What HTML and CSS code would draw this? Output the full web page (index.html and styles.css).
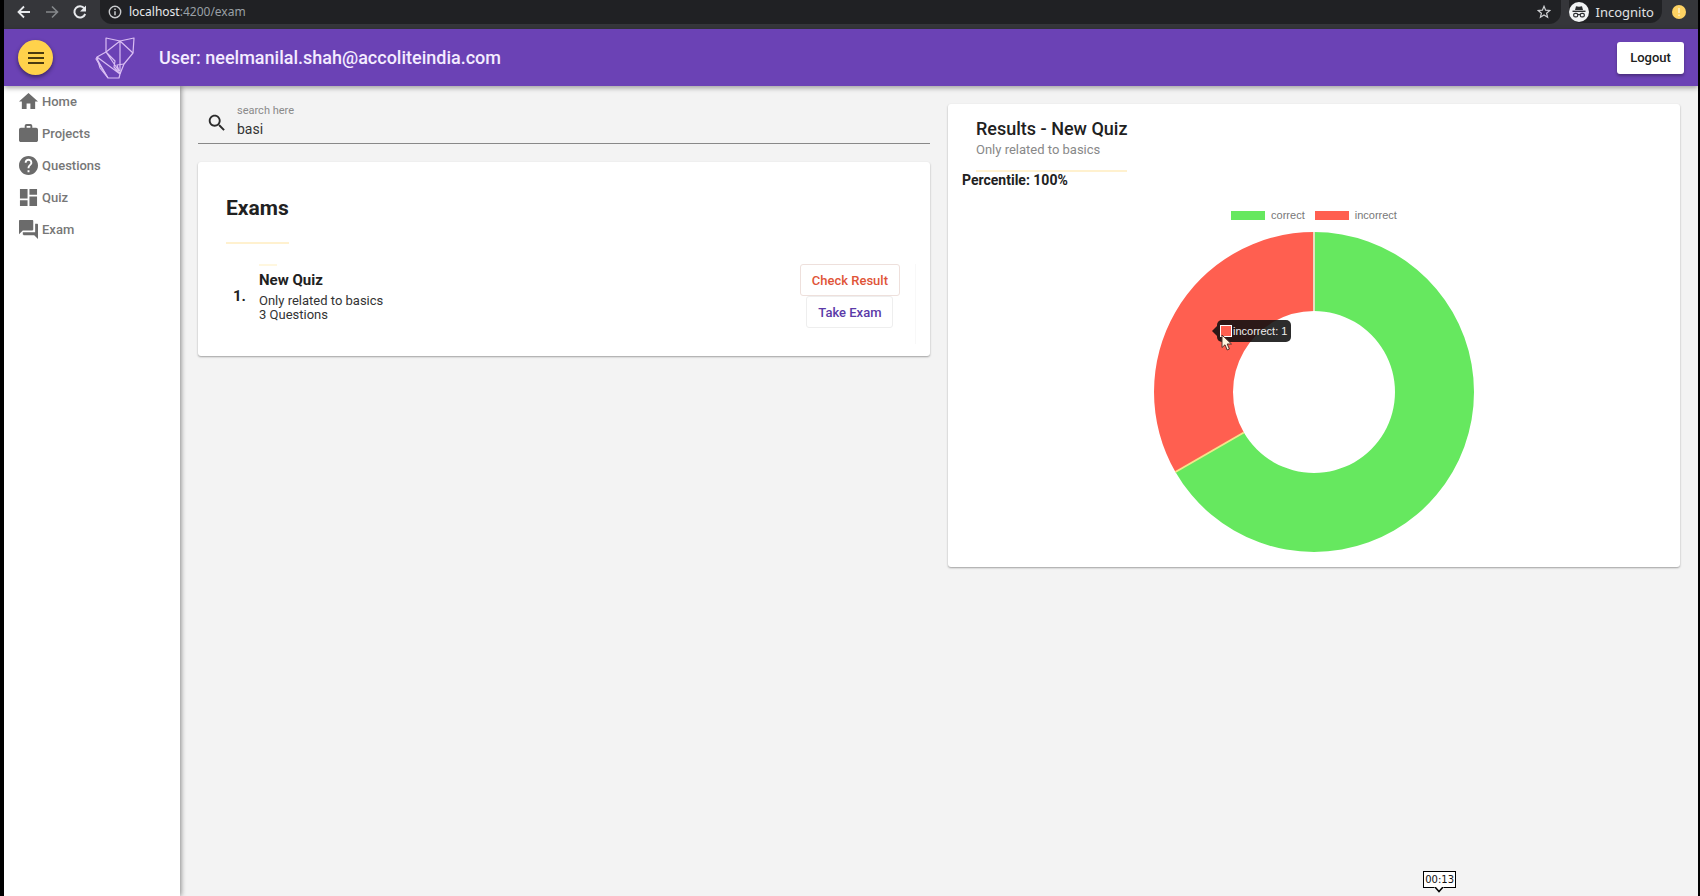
FILE: index.html
```html
<!DOCTYPE html>
<html lang="en">
<head>
<meta charset="utf-8">
<title>Exam</title>
<link rel="stylesheet" href="styles.css">
</head>
<body>
<div class="window">
  <div class="browser">
    <button class="nav-btn" aria-label="Back"><svg width="16" height="16" viewBox="0 0 16 16" fill="none" stroke="#e8eaed" stroke-width="1.8"><path d="M14 8H3M8 2.5L2.5 8L8 13.5"/></svg></button>
    <button class="nav-btn" aria-label="Forward"><svg width="16" height="16" viewBox="0 0 16 16" fill="none" stroke="#85888b" stroke-width="1.6"><path d="M2 8h11M8 2.5L13.5 8L8 13.5"/></svg></button>
    <button class="nav-btn" aria-label="Reload"><svg width="16" height="16" viewBox="0 0 16 16"><path d="M13.2 10A5.6 5.6 0 1 1 12.4 4.4" fill="none" stroke="#e8eaed" stroke-width="2"/><path d="M14 1.5V7.5H8Z" fill="#e8eaed"/></svg></button>
    <div class="address">
      <svg width="14" height="14" viewBox="0 0 14 14"><circle cx="7" cy="7" r="5.7" fill="none" stroke="#c9cbce" stroke-width="1.4"/><path d="M7 6.2V10.2M7 3.6V5" stroke="#c9cbce" stroke-width="1.5"/></svg>
      <span class="url"><b>localhost</b>:4200/exam</span>
      <button class="star" aria-label="Bookmark"><svg width="14" height="14" viewBox="0 0 14 14"><path d="M7 1.3L8.6 5.2L12.8 5.5L9.6 8.2L10.6 12.3L7 10L3.4 12.3L4.4 8.2L1.2 5.5L5.4 5.2Z" fill="none" stroke="#cfd1d4" stroke-width="1.2"/></svg></button>
    </div>
    <div class="incognito">
      <svg width="20" height="20" viewBox="0 0 20 20"><circle cx="10" cy="10" r="10" fill="#f1f3f4"/><path d="M7 4.2L10 4.8L13 4.2L14 8H6Z" fill="#2b2d30"/><path d="M3.5 9.3H16.5" stroke="#2b2d30" stroke-width="1.4"/><g fill="none" stroke="#2b2d30" stroke-width="1.2"><rect x="4.7" y="11.3" width="4" height="3.6" rx="1.5"/><rect x="11.3" y="11.3" width="4" height="3.6" rx="1.5"/><path d="M8.7 12.5H11.3"/></g></svg>
      <span>Incognito</span>
    </div>
    <button class="update" aria-label="Update"><svg width="14" height="14" viewBox="0 0 14 14"><circle cx="7" cy="7" r="7" fill="#fdd263"/><path d="M7 3V8M7 9.4V11" stroke="#fff0c4" stroke-width="1.6"/></svg></button>
  </div>

  <header class="toolbar">
    <button class="menu" aria-label="Menu"><svg width="16" height="12" viewBox="0 0 16 12"><path d="M0 1H16M0 6H16M0 11H16" stroke="#4a3b10" stroke-width="2"/></svg></button>
    <svg class="logo" width="40" height="42" viewBox="0 0 40 42" fill="none" stroke="#d9bdf3" stroke-width="1.2" stroke-linejoin="round"><path d="M11 1L25 4L39 1L38 16L29 27L25 37L24 41H13L1 22L2 20L11 15Z"/><path d="M25 4L11 15M25 4L38 16M25 4V37M11 15L20 24L19 30L25 37M2 20L25 37M2 20L5 31L13 41M2 22L13 41M11 15L24 34M29 27L22 28L24 34"/></svg>
    <span class="user">User: neelmanilal.shah@accoliteindia.com</span>
    <button class="logout">Logout</button>
  </header>

  <div class="body">
    <nav class="sidebar">
      <a href="#"><svg viewBox="2 2 20 20"><path d="M10 20v-6h4v6h5v-8h3L12 3 2 12h3v8z"/></svg>Home</a>
      <a href="#"><svg viewBox="2 2 20 20"><path d="M20 6h-4V4c0-1.110-.89-2-2-2h-4c-1.110 0-2 .89-2 2v2H4c-1.110 0-2 .89-2 2v11c0 1.110.89 2 2 2h16c1.110 0 2-.89 2-2V8c0-1.110-.89-2-2-2zm-6 0h-4V4h4v2z"/></svg>Projects</a>
      <a href="#"><svg viewBox="2 2 20 20"><path d="M12 2C6.480 2 2 6.480 2 12s4.480 10 10 10 10-4.480 10-10S17.520 2 12 2zm1 17h-2v-2h2v2zm2.070-7.750l-.9.920C13.450 12.900 13 13.500 13 15h-2v-.5c0-1.100.45-2.100 1.170-2.830l1.240-1.260c.37-.36.59-.86.59-1.410 0-1.100-.9-2-2-2s-2 .9-2 2H8c0-2.210 1.790-4 4-4s4 1.790 4 4c0 .88-.36 1.680-.93 2.250z"/></svg>Questions</a>
      <a href="#"><svg viewBox="2 2 20 20"><path d="M3 13h8V3H3v10zm0 8h8v-6H3v6zm10 0h8V11h-8v10zm0-18v6h8V3h-8z"/></svg>Quiz</a>
      <a href="#"><svg viewBox="2 2 20 20"><path d="M21 6h-2v9H6v2c0 .55.45 1 1 1h11l4 4V7c0-.55-.45-1-1-1zm-4 6V3c0-.55-.45-1-1-1H3c-.55 0-1 .45-1 1v14l4-4h10c.55 0 1-.45 1-1z"/></svg>Exam</a>
    </nav>

    <main class="content">
      <section class="column">
        <div class="search">
          <svg width="22" height="22" viewBox="0 0 24 24" fill="#2b2b2b"><path d="M15.500 14h-.79l-.28-.27C15.410 12.590 16 11.110 16 9.500 16 5.910 13.090 3 9.500 3S3 5.910 3 9.500 5.910 16 9.500 16c1.610 0 3.090-.59 4.230-1.570l.27.28v.79l5 4.990L20.490 19l-4.990-5zm-6 0C7.010 14 5 11.990 5 9.500S7.010 5 9.500 5 14 7.010 14 9.500 11.990 14 9.500 14z"/></svg>
          <div class="field">
            <label for="q">search here</label>
            <input id="q" type="text" value="basi">
          </div>
        </div>
        <article class="card exams">
          <h1>Exams</h1>
          <div class="exam">
            <span class="number">1.</span>
            <div class="info">
              <h2>New Quiz</h2>
              <p>Only related to basics</p>
              <p>3 Questions</p>
            </div>
            <div class="actions">
              <button class="check">Check Result</button>
              <button class="take">Take Exam</button>
            </div>
          </div>
        </article>
      </section>

      <section class="column">
        <article class="card results">
          <header class="head">
            <h2>Results - New Quiz</h2>
            <p>Only related to basics</p>
          </header>
          <h3>Percentile: 100%</h3>
          <div class="legend">
            <span><i class="swatch green"></i>correct</span>
            <span><i class="swatch red"></i>incorrect</span>
          </div>
          <div class="chart">
            <svg width="322" height="322" viewBox="-161 -161 322 322">
              <path d="M0-160A160 160 0 1 1-138.560 80L-70.150 40.500A81 81 0 1 0 0-81Z" fill="#66e85f"/>
              <path d="M0-160A160 160 0 0 0-138.560 80L-70.150 40.500A81 81 0 0 1 0-81Z" fill="#ff5f50"/>
              <path d="M0-160V-81" stroke="#e6dfc0" stroke-width="2"/>
              <path d="M-138.560 80L-70.150 40.500" stroke="#f4e58a" stroke-width="2"/>
            </svg>
            <div class="tip"><i></i>incorrect: 1</div>
            <svg class="cursor" width="12" height="18" viewBox="0 0 12 18"><path d="M1 1V13.500L4 10.800L6.200 16L8.400 15L6.200 10H10.500Z" fill="#fff5df" stroke="#54302a" stroke-width="1"/></svg>
          </div>
        </article>
      </section>
    </main>
  </div>
</div>
<div class="time">00:13<svg width="10" height="6" viewBox="0 0 10 6"><path d="M0 0H10L5 5Z" fill="#fff"/><path d="M1 0L5 4.500L9 0" fill="none" stroke="#000" stroke-width="1.5"/></svg></div>
</body>
</html>
```
FILE: styles.css
```css
* { box-sizing: border-box; }
body { margin: 0; background: #000; font-family: Roboto, sans-serif; color: #212121; }
h1, h2, h3, p { margin: 0; }
button { font: inherit; border: 0; padding: 0; background: none; }
svg { display: block; flex: none; }

.window { min-height: 100vh; padding: 0 2px 0 4px; display: flex; flex-direction: column; }

.browser { height: 29px; padding: 0 12px 6px 12px; display: flex; align-items: center; background: #35363a; font-family: "Noto Sans", sans-serif; }
.nav-btn { width: 28px; height: 16px; }
.address { flex: 1; height: 24px; margin-right: 8px; padding: 0 10px 0 8px; border-radius: 0 0 12px 12px; display: flex; align-items: center; gap: 7px; background: #202124; }
.url { flex: 1; font-size: 12px; color: #9aa0a6; }
.url b { font-weight: 400; color: #e8eaed; }
.incognito { height: 23px; padding-right: 8px; border-radius: 0 0 12px 12px; display: flex; align-items: center; gap: 7px; background: #202124; color: #e0e1e3; font-size: 13px; }
.update { margin-left: 10px; }

.toolbar { position: relative; z-index: 2; height: 57px; padding: 0 14px; display: flex; align-items: center; background: #6b42b5; box-shadow: 0 2px 5px rgba(0, 0, 0, .35); color: #f4ecff; }
.menu { width: 35px; height: 35px; border-radius: 50%; display: grid; place-items: center; background: #ffd24b; box-shadow: 0 2px 4px rgba(0, 0, 0, .45); }
.logo { margin-left: 42px; }
.user { margin-left: 24px; flex: 1; font-size: 18px; font-weight: 500; }
.logout { width: 67px; height: 32px; border-radius: 3px; background: #fff; box-shadow: 0 2px 3px rgba(0, 0, 0, .3); color: #212121; font-size: 13px; font-weight: 500; }

.body { flex: 1; display: flex; background: #f3f3f3; }
.sidebar { position: relative; z-index: 1; width: 176px; background: #fff; box-shadow: 1px 0 5px rgba(0, 0, 0, .45); }
.sidebar a { height: 32px; padding: 0 0 2px 15px; display: flex; align-items: center; gap: 4px; color: #777; font-size: 13px; font-weight: 500; text-decoration: none; }
.sidebar svg { width: 19px; height: 19px; fill: #6b6b6b; }

.content { flex: 1; padding: 18px; display: grid; grid-template-columns: 1fr 1fr; gap: 18px; align-items: start; }
.search { height: 40px; padding: 0 0 2px 8px; display: flex; gap: 9px; align-items: center; border-bottom: 1px solid #888; }
.field { flex: 1; }
.field label { display: block; font-size: 11px; line-height: 12px; color: #8a8a8a; }
.field input { display: block; width: 100%; height: 24px; border: 0; padding: 0; outline: 0; background: none; font: 14px/24px Roboto, sans-serif; color: #333; }

.card { border-radius: 3px; background: #fff; box-shadow: 0 1px 2px rgba(0, 0, 0, .35); }
.exams { margin-top: 18px; padding: 28px 14px 12px 28px; }
.exams h1 { width: max-content; padding-bottom: 16px; border-bottom: 2px solid #fff1cf; font-size: 21px; line-height: 36px; font-weight: 700; }
.exam { margin-top: 20px; padding-bottom: 16px; display: flex; align-items: center; border-right: 1px solid #f8f8f8; }
.number { width: 33px; padding-left: 7px; font-size: 15px; font-weight: 700; }
.info { flex: 1; align-self: flex-start; }
.info h2 { font-size: 15px; line-height: 28px; }
.info h2::before { content: ""; display: block; width: 18px; height: 2px; background: #fff7df; }
.info p { font-size: 13px; line-height: 14px; color: #333; }
.actions { display: flex; flex-direction: column; align-items: center; margin-right: 15px; }
.actions button { height: 32px; padding: 0 11px; border: 1px solid #eee; border-radius: 3px; font-size: 13px; font-weight: 500; }
.actions .check { border-color: #eee0dc; color: #e05438; }
.actions .take { color: #5b3aa8; }

.results { padding: 13px 14px 14px; }
.head { width: max-content; margin-left: 14px; padding-bottom: 11px; border-bottom: 2px solid #fff1cf; }
.head h2 { font-size: 18px; line-height: 23px; font-weight: 500; }
.head p { font-size: 13px; line-height: 19px; color: #888; }
.results h3 { font-size: 14px; line-height: 16px; }
.legend { margin-top: 20px; display: flex; justify-content: center; gap: 10px; font: 11px/14px "Liberation Sans", sans-serif; color: #777; }
.legend span { display: flex; align-items: center; gap: 6px; }
.swatch { width: 34px; height: 9px; }
.green { background: #66e85f; }
.red { background: #ff5f50; }
.chart { position: relative; width: 322px; margin: 9px auto 0; }
.tip { position: absolute; left: 64px; top: 89px; height: 22px; padding: 0 4px 0 3px; border-radius: 5px; display: flex; align-items: center; background: rgba(15, 15, 15, .88); color: #eee; font: 11px "Liberation Sans", sans-serif; white-space: nowrap; }
.tip::before { content: ""; position: absolute; right: 100%; top: 6px; border: 5px solid transparent; border-left: 0; border-right-color: rgba(15, 15, 15, .88); }
.tip i { width: 12px; height: 12px; margin-right: 1px; border: 1px solid #fff; background: #ff5f50; }
.cursor { position: absolute; left: 68px; top: 103px; }

.time { position: fixed; right: 244px; bottom: 8px; padding: 0 1px; border: 1px solid #000; background: #fff; color: #111; font: 10px/15px "DejaVu Sans", sans-serif; }
.time svg { position: absolute; left: 10px; top: 100%; }
```
